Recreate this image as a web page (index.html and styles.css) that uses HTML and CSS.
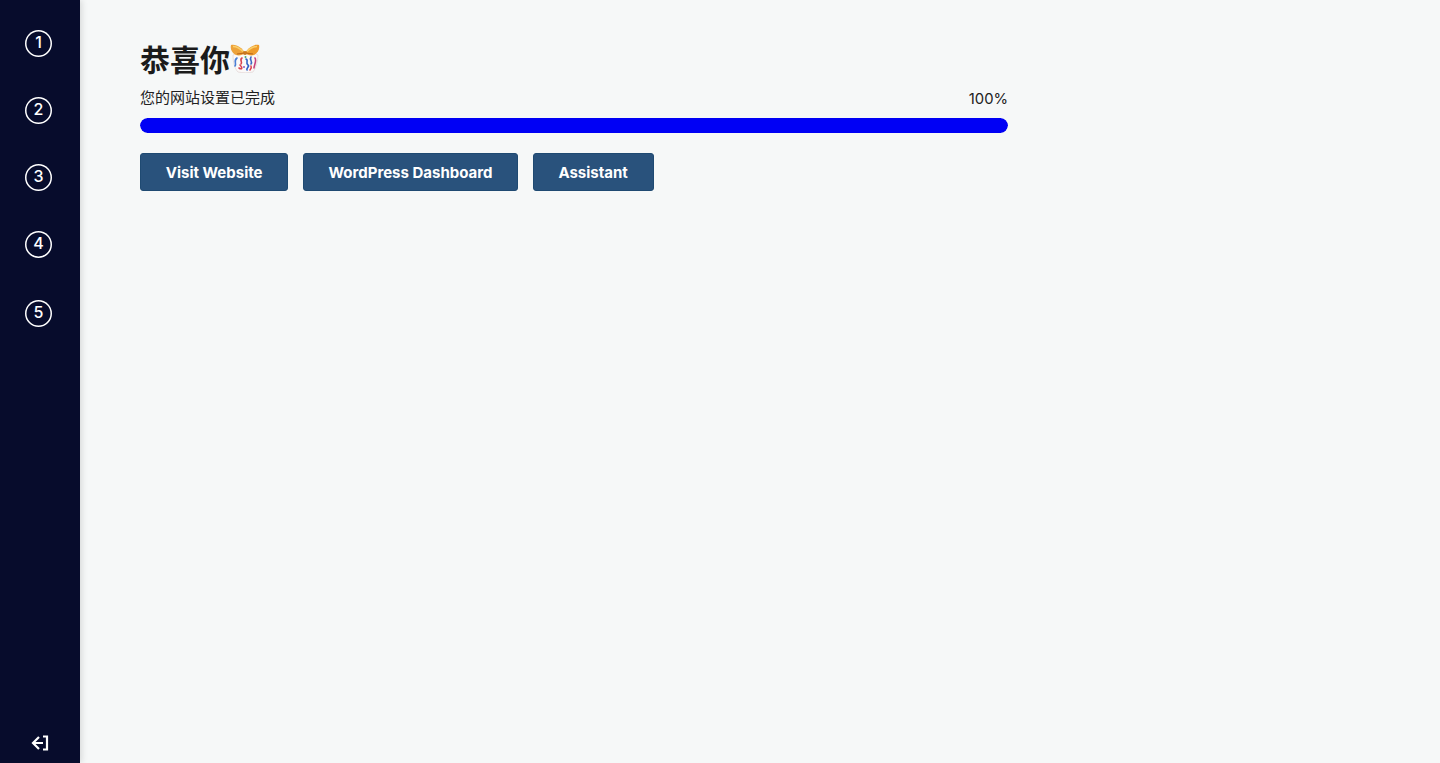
FILE: index.html
```html
<!DOCTYPE html>
<html lang="zh">
<head>
<meta charset="utf-8">
<title>恭喜你</title>
<link rel="stylesheet" href="styles.css">
</head>
<body>
<div class="app">
  <nav class="sidebar">
    <ol class="steps">
      <li class="step">1</li>
      <li class="step">2</li>
      <li class="step">3</li>
      <li class="step">4</li>
      <li class="step step-last">5</li>
    </ol>
    <a class="exit" href="#" aria-label="Exit">
      <svg width="18" height="16" viewBox="0 0 18 16" fill="none" stroke="#fff" stroke-width="2.2">
        <path d="M8 2 2 8 8 14M2 8H12"/>
        <path d="M12 1.500H16V14.500H12"/>
      </svg>
    </a>
  </nav>
  <main class="content">
    <h1 class="title">恭喜你<svg class="emoji" width="30" height="30" viewBox="0 0 30 30">
      <path d="M3 12C3 20 5 26 8 29C13 30 18 30 23 29C26 25 28 18 28 12C22 8 9 8 3 12Z" fill="#fbf9f8" stroke="#e3d8d8" stroke-width=".8"/>
      <path d="M15 10C12 5 7 1 1 2C0 6 2 10 6 12C9 13 13 12 15 10Z" fill="#eda23a"/>
      <path d="M15 10C18 5 23 1 29 2C30 6 28 10 24 12C21 13 17 12 15 10Z" fill="#ef9c2c"/>
      <path d="M3 3.500C7 3.500 10 5.500 13 8.500" stroke="#f9cf6a" stroke-width="1.500" fill="none"/>
      <path d="M27 3.500C23 3.500 20 5.500 17 8.500" stroke="#f9cf6a" stroke-width="1.500" fill="none"/>
      <path d="M15 10 7 11M15 10 23 11" stroke="#b9671c" stroke-width="1.200" fill="none"/>
      <circle cx="15" cy="10" r="2" fill="#c9781f"/>
      <g fill="none" stroke-width="1.600" stroke-linecap="round">
        <path d="M7 15C3 18 7 20 5 23" stroke="#4a7fd6"/>
        <path d="M9 25C12 27 13 25 10 22" stroke="#d9434f"/>
        <path d="M12 15C9 17 13 19 11 21" stroke="#d9434f"/>
        <path d="M16 16C19 17 15 20 18 22C20 23 16 25 17 27" stroke="#2f62c8"/>
        <path d="M21 14C19 17 23 18 21 21" stroke="#3d68c4"/>
        <path d="M25 15C27 18 24 22 24 25" stroke="#c7427e"/>
        <path d="M21 23C22 25 21 26 20 27" stroke="#d9434f"/>
      </g>
      <circle cx="15.500" cy="14" r="1" fill="#49a86b"/>
      <circle cx="14" cy="24" r="1" fill="#8a5cc4"/>
    </svg></h1>
    <div class="progress-label">
      <span>您的网站设置已完成</span>
      <span class="percent">100%</span>
    </div>
    <div class="progress-track"><div class="progress-fill"></div></div>
    <div class="actions">
      <a class="button" href="#">Visit Website</a>
      <a class="button" href="#">WordPress Dashboard</a>
      <a class="button" href="#">Assistant</a>
    </div>
  </main>
</div>
</body>
</html>
```
FILE: styles.css
```css
* { box-sizing: border-box; }
html, body { margin: 0; height: 100%; }
body {
  background: #f6f8f8;
  color: #1a1a1a;
  font-family: Inter, "Noto Sans CJK SC", sans-serif;
  overflow: hidden;
}
.app { display: flex; height: 763px; }
.sidebar {
  width: 80px;
  flex: none;
  background: #070c2c;
  box-shadow: 2px 0 6px rgba(0, 0, 0, .12);
  display: flex;
  flex-direction: column;
  justify-content: space-between;
  padding: 30px 0 12px;
}
.steps {
  list-style: none;
  margin: 0;
  padding: 0 0 0 25px;
  display: flex;
  flex-direction: column;
  gap: 40px;
}
.step {
  width: 27px;
  height: 27px;
  box-shadow: inset 0 0 0 1.5px #fff;
  border-radius: 50%;
  color: #fff;
  font-size: 16px;
  font-weight: 500;
  line-height: 25px;
  text-align: center;
}
.step-last { margin-top: 2px; }
.exit { display: flex; padding-left: 31px; }
.content { flex: 1; padding: 41px 0 0 60px; }
.title {
  margin: 0;
  display: flex;
  align-items: center;
  height: 38px;
  font-size: 30px;
  font-weight: 700;
  line-height: 38px;
  color: #1b1b1b;
}
.emoji { margin-top: -4px; flex: none; }
.progress-label {
  width: 868px;
  margin-top: 8px;
  display: flex;
  justify-content: space-between;
  font-size: 15px;
  line-height: 22px;
  color: #222;
}
.percent { font-size: 14.8px; line-height: 20px; margin-top: 2px; }
.progress-track {
  width: 868px;
  height: 15px;
  margin-top: 9px;
  border-radius: 8px;
  background: #e3e6ea;
  overflow: hidden;
}
.progress-fill { height: 100%; width: 100%; background: #0000f5; border-radius: 8px; }
.actions { display: flex; gap: 14.5px; margin-top: 20px; }
.button {
  display: block;
  height: 38px;
  padding: 1px 24.75px 0;
  background: #29527c;
  border: 1px solid #1f4a72;
  border-radius: 3px;
  color: #fff;
  font-size: 15px;
  font-weight: 700;
  line-height: 36px;
  text-decoration: none;
  white-space: nowrap;
}
```
